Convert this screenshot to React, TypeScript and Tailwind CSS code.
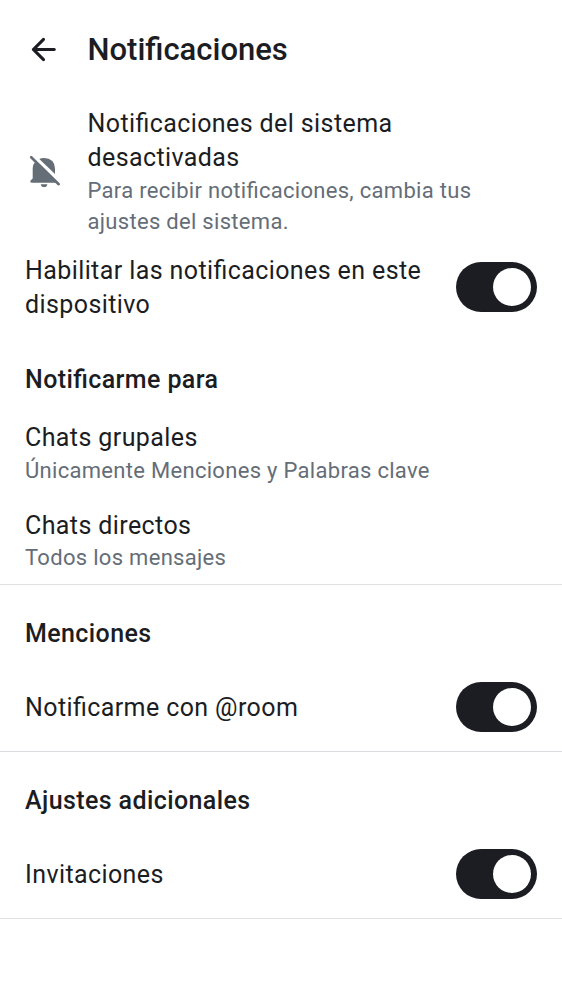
import React from "react";

function Toggle() {
  return (
    <div className="flex h-[50px] w-[81px] shrink-0 items-center justify-end rounded-full bg-[#1b1d22] pr-[6px]">
      <div className="size-[38px] rounded-full bg-white" />
    </div>
  );
}

function Title({ children }: { children: React.ReactNode }) {
  return <div className="text-[25px] leading-[34px] tracking-[0.4px]">{children}</div>;
}

function Sub({ children }: { children: React.ReactNode }) {
  return <div className="text-[22px] leading-[31px] tracking-[0.3px] text-[#656d77]">{children}</div>;
}

function Heading({ children }: { children: React.ReactNode }) {
  return <h2 className="px-[25px] text-[25px] font-medium leading-[34px] tracking-[0.4px]">{children}</h2>;
}

export default function App() {
  return (
    <main className="h-[1000px] w-full overflow-hidden whitespace-nowrap bg-white font-[Roboto,sans-serif] text-[#1b1d22] [font-feature-settings:'liga'_1]">
      <header className="flex h-[100px] items-center">
        <svg className="mb-px ml-[25px] size-[37px] shrink-0" viewBox="0 0 24 24" fill="currentColor">
          <path d="m7.825 13 4.9 4.9q.3.3.287.7t-.312.7q-.3.275-.7.288t-.7-.288l-6.6-6.6q-.15-.15-.213-.325T4.426 12t.062-.375.213-.325l6.6-6.6q.275-.275.688-.275t.712.275q.3.3.3.713t-.3.712L7.825 11H19q.425 0 .713.287T20 12t-.287.713T19 13z" />
        </svg>
        <h1 className="ml-[25.5px] text-[31px] font-medium leading-[44px]">Notificaciones</h1>
      </header>
      <section className="flex h-[142px] pt-[7px]">
        <svg className="ml-[25px] mt-[43px] h-[42px] w-[40px] shrink-0 text-[#656d77]" viewBox="0 0 40 42">
          <path d="M6.2 7.2L33.7 34.2" stroke="currentColor" strokeWidth="2.6" strokeLinecap="round" />
          <path d="M10.5 11.4L32 32.8H7Q5.3 32.8 5.3 31.4Q5.3 30.3 6.4 29.7L7.7 28.6V18Q7.8 14.3 10.5 11.4Z" fill="currentColor" />
          <path d="M14.3 9Q16 7.9 19 7.9Q29.5 8.2 30 18.5V24Z" fill="currentColor" />
          <path d="M15.8 34.2h6.6q-.5 2.9-3.3 2.9t-3.3-2.9Z" fill="currentColor" />
        </svg>
        <div className="ml-[22.5px]">
          <Title>Notificaciones del sistema<br />desactivadas</Title>
          <Sub>Para recibir notificaciones, cambia tus<br />ajustes del sistema.</Sub>
        </div>
      </section>
      <section className="flex h-[91px] items-center justify-between px-[25px]">
        <Title>Habilitar las notificaciones en este<br />dispositivo</Title>
        <div className="mb-px"><Toggle /></div>
      </section>
      <section className="h-[252px] border-b border-[#dfe0e2] pt-[30px]">
        <Heading>Notificarme para</Heading>
        <div className="mt-[24px] px-[25px]">
          <Title>Chats grupales</Title>
          <Sub>Únicamente Menciones y Palabras clave</Sub>
        </div>
        <div className="mt-[23px] px-[25px]">
          <Title>Chats directos</Title>
          <div className="-mt-px"><Sub>Todos los mensajes</Sub></div>
        </div>
      </section>
      <section className="h-[167px] border-b border-[#d9dbde] pt-[32px]">
        <Heading>Menciones</Heading>
        <div className="mt-[31px] flex items-center justify-between px-[25px]">
          <div className="pt-[2px]"><Title>Notificarme con @room</Title></div>
          <Toggle />
        </div>
      </section>
      <section className="h-[167px] border-b border-[#dfe0e2] pt-[32px]">
        <Heading>Ajustes adicionales</Heading>
        <div className="mt-[31px] flex items-center justify-between px-[25px]">
          <div className="pt-[2px]"><Title>Invitaciones</Title></div>
          <Toggle />
        </div>
      </section>
    </main>
  );
}
